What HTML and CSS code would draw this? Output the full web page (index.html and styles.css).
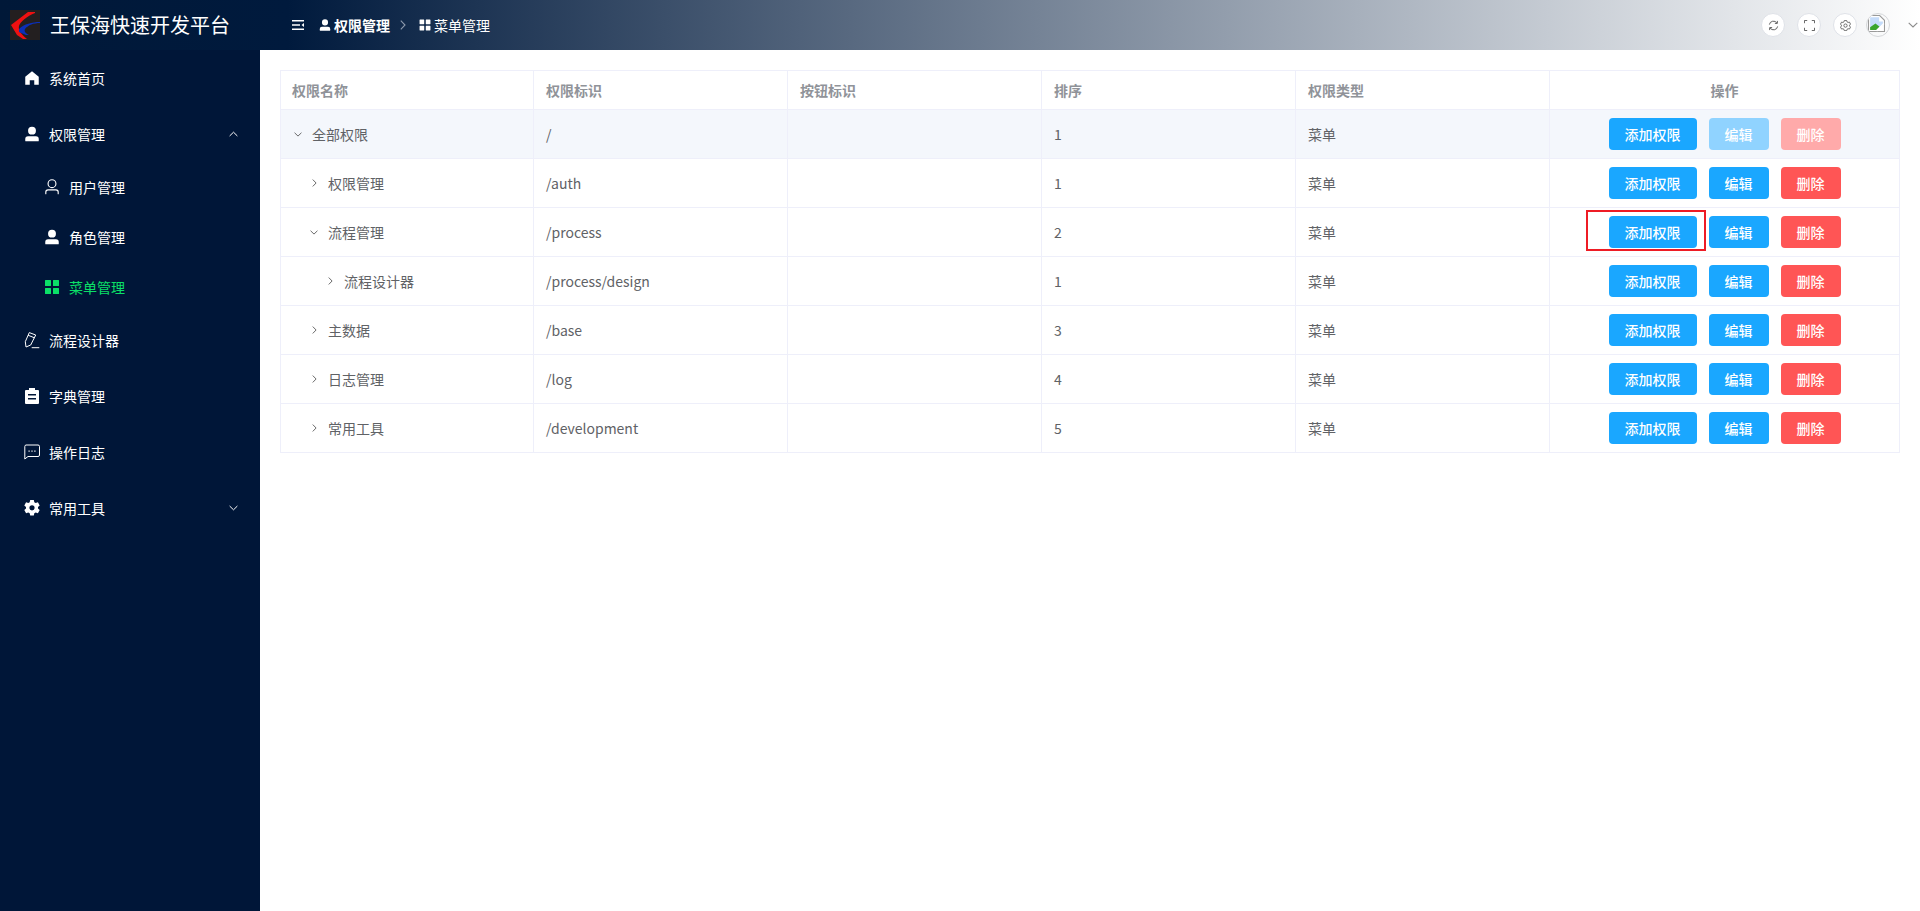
FILE: index.html
```html
<!DOCTYPE html>
<html>
<head>
	<meta charset="utf-8">
	<meta name="viewport" content="width=device-width, initial-scale=1">
	<title>王保海快速开发平台</title>
	<link rel="stylesheet" href="styles.css">
</head>
<body>
	<svg class="sprite" xmlns="http://www.w3.org/2000/svg">
		<symbol id="i-home" viewBox="0 0 1024 1024"><path fill="currentColor" d="M512 128 128 447.936V896h255.936V640H640v256h255.936V447.936z"/></symbol>
		<symbol id="i-user-fill" viewBox="0 0 1024 1024"><path fill="currentColor" d="M288 320a224 224 0 1 0 448 0 224 224 0 1 0-448 0m544 608H160a32 32 0 0 1-32-32v-96a160 160 0 0 1 160-160h448a160 160 0 0 1 160 160v96a32 32 0 0 1-32 32z"/></symbol>
		<symbol id="i-user" viewBox="0 0 1024 1024"><path fill="currentColor" d="M512 512a192 192 0 1 0 0-384 192 192 0 0 0 0 384zm0 64a256 256 0 1 1 0-512 256 256 0 0 1 0 512zm320 320v-96a96 96 0 0 0-96-96H288a96 96 0 0 0-96 96v96a32 32 0 1 1-64 0v-96a160 160 0 0 1 160-160h448a160 160 0 0 1 160 160v96a32 32 0 1 1-64 0z"/></symbol>
		<symbol id="i-grid" viewBox="-2 -2 18 18"><path fill="currentColor" d="M0 .5a.5.5 0 0 1 .5-.5h5a.5.5 0 0 1 .5.5v5a.5.5 0 0 1-.5.5h-5a.5.5 0 0 1-.5-.5zM8 .5a.5.5 0 0 1 .5-.5h5a.5.5 0 0 1 .5.5v5a.5.5 0 0 1-.5.5h-5a.5.5 0 0 1-.5-.5zM0 8.5a.5.5 0 0 1 .5-.5h5a.5.5 0 0 1 .5.5v5a.5.5 0 0 1-.5.5h-5a.5.5 0 0 1-.5-.5zM8 8.5a.5.5 0 0 1 .5-.5h5a.5.5 0 0 1 .5.5v5a.5.5 0 0 1-.5.5h-5a.5.5 0 0 1-.5-.5z"/></symbol>
		<symbol id="i-pen" viewBox="-1 -1 18 18"><path fill="none" stroke="currentColor" d="M5.300.6 11.700 3 6.700 13 2 15 1.300 9.700zM4 3.200l6.400 2.600"/><path fill="none" stroke="currentColor" d="M7.700 15.700h7.600"/></symbol>
		<symbol id="i-clip" viewBox="-2 -1 18 18"><path fill="currentColor" d="M4 0h6v2h3a1 1 0 0 1 1 1v12a1 1 0 0 1-1 1H1a1 1 0 0 1-1-1V3a1 1 0 0 1 1-1h3zM3 6v1.600h8V6zm0 4v1.600h8V10z"/></symbol>
		<symbol id="i-chat" viewBox="-1 -1 18 18"><path fill="none" stroke="currentColor" d="M2 1h12a1.500 1.500 0 0 1 1.500 1.500v8.500a1.500 1.500 0 0 1-1.500 1.500H4L.8 15V2.500A1.500 1.500 0 0 1 2 1z"/><path fill="currentColor" d="M4.500 6.500h1.200v1.200H4.500zM7.400 6.500h1.200v1.200H7.400zM10.300 6.500h1.200v1.200h-1.200z"/></symbol>
		<symbol id="i-gear" viewBox="-1 -1 18 18"><path fill="currentColor" fill-rule="evenodd" d="M6.200 0h3.600l.5 2.200 1.400.8 2.200-.7L15.700 5.400l-1.700 1.500v1.700l1.700 1.500-1.800 3.100-2.200-.7-1.400.8-.5 2.200H6.200l-.5-2.200-1.400-.8-2.200.7L.3 10.100l1.700-1.500V6.900L.3 5.400l1.800-3.100 2.200.7 1.400-.8zM8 5.200a2.600 2.600 0 1 0 0 5.200 2.600 2.600 0 0 0 0-5.200z"/></symbol>
		<symbol id="i-down" viewBox="0 0 10 6"><path fill="none" stroke="currentColor" stroke-width="1.100" d="M.7.800 5 5 9.300.800"/></symbol>
		<symbol id="i-up" viewBox="0 0 10 6"><path fill="none" stroke="currentColor" stroke-width="1.100" d="M.7 5.200 5 1l4.300 4.200"/></symbol>
		<symbol id="i-right" viewBox="0 0 6 10"><path fill="none" stroke="currentColor" stroke-width="1.100" d="M.8.700 5 5 .8 9.300"/></symbol>
	</svg>

	<header class="topbar">
		<div class="brand">
			<svg class="brand-logo" viewBox="0 0 30 30">
				<rect width="30" height="30" fill="#231f20"/>
				<path fill="#ee1111" d="M25 2H18L1 15l6 10 6 4h4C11 24 8 20 9 16c1-4 8-10 16-13z"/>
				<path fill="#0b2fb8" d="M30 12C22 12 14 14 9 19v3l7 3h3c-4-2-5-4-4-6 3-4 9-6 15-6z"/>
			</svg>
			<span class="brand-title">王保海快速开发平台</span>
		</div>
		<svg class="fold-icon" viewBox="0 0 12 10"><path fill="none" stroke="#fff" stroke-width="1.400" d="M0 .7h12M0 5h8M0 9.300h12"/><path fill="#fff" d="M12 3l-2.500 2L12 7z"/></svg>
		<nav class="crumbs">
			<svg class="crumb-icon"><use href="#i-user-fill"/></svg>
			<span class="crumb-strong">权限管理</span>
			<svg class="crumb-sep"><use href="#i-right"/></svg>
			<svg class="crumb-icon"><use href="#i-grid"/></svg>
			<span class="crumb-last">菜单管理</span>
		</nav>
		<div class="tools">
			<span class="tool">
				<svg viewBox="0 0 12 12"><path fill="none" stroke="#444" stroke-width=".9" d="M1.500 5A4.500 4.500 0 0 1 9.700 3.300M10.500 7A4.500 4.500 0 0 1 2.300 8.700M10.200 1v2.700H7.500M1.800 11V8.300h2.700"/></svg>
			</span>
			<span class="tool">
				<svg viewBox="0 0 12 12"><path fill="none" stroke="#444" stroke-width=".9" d="M.5 3.500V.5h3M8.500.5h3v3M11.500 8.500v3h-3M3.500 11.500h-3v-3"/></svg>
			</span>
			<span class="tool">
				<svg viewBox="0 0 12 12"><path fill="none" stroke="#444" stroke-width=".8" d="M4.700.6h2.600l.4 1.500 1.100.6 1.500-.4 1.200 2.200-1.100 1.100v1l1.100 1.100-1.200 2.200-1.500-.4-1.100.6-.4 1.500H4.700l-.4-1.500-1.100-.6-1.500.4L.5 7.700l1.100-1.100v-1L.5 4.500l1.200-2.200 1.500.4 1.100-.6z"/><circle cx="6" cy="6.100" r="1.800" fill="none" stroke="#444" stroke-width=".8"/></svg>
			</span>
			<span class="avatar">
				<svg viewBox="0 0 16 16">
					<path fill="#fff" stroke="#9a9a9a" d="M.5.500h10.500l4.500 4.500v10.500H.5z"/>
					<path fill="#c5dcfa" d="M2 2h8.500v4H14v4L2 13z"/>
					<path fill="#3aa52c" d="M2 14v-2.500L7 8l4 3-3 3z"/>
					<path fill="none" stroke="#fff" stroke-width="1.500" d="M8 15l7-7"/>
				</svg>
			</span>
			<svg class="avatar-caret"><use href="#i-down"/></svg>
		</div>
	</header>

	<div class="layout">
		<aside class="sidebar">
			<a class="menu-item"><svg class="menu-icon"><use href="#i-home"/></svg>系统首页</a>
			<a class="menu-item"><svg class="menu-icon"><use href="#i-user-fill"/></svg>权限管理<svg class="menu-arrow"><use href="#i-up"/></svg></a>
			<a class="menu-sub"><svg class="menu-icon"><use href="#i-user"/></svg>用户管理</a>
			<a class="menu-sub"><svg class="menu-icon"><use href="#i-user-fill"/></svg>角色管理</a>
			<a class="menu-sub active"><svg class="menu-icon"><use href="#i-grid"/></svg>菜单管理</a>
			<a class="menu-item"><svg class="menu-icon"><use href="#i-pen"/></svg>流程设计器</a>
			<a class="menu-item"><svg class="menu-icon"><use href="#i-clip"/></svg>字典管理</a>
			<a class="menu-item"><svg class="menu-icon"><use href="#i-chat"/></svg>操作日志</a>
			<a class="menu-item"><svg class="menu-icon"><use href="#i-gear"/></svg>常用工具<svg class="menu-arrow"><use href="#i-down"/></svg></a>
		</aside>

		<main class="content">
			<table class="grid">
				<colgroup>
					<col class="col-data"><col class="col-data"><col class="col-data"><col class="col-data"><col class="col-data"><col>
				</colgroup>
				<thead>
					<tr>
						<th>权限名称</th>
						<th>权限标识</th>
						<th>按钮标识</th>
						<th>排序</th>
						<th>权限类型</th>
						<th class="center">操作</th>
					</tr>
				</thead>
				<tbody>
					<tr class="row-current">
						<td><div class="tree"><svg class="tree-down"><use href="#i-down"/></svg>全部权限</div></td>
						<td>/</td><td></td><td>1</td><td>菜单</td>
						<td><div class="ops"><button class="btn">添加权限</button><button class="btn off">编辑</button><button class="btn danger off">删除</button></div></td>
					</tr>
					<tr>
						<td><div class="tree lvl1"><svg class="tree-right"><use href="#i-right"/></svg>权限管理</div></td>
						<td>/auth</td><td></td><td>1</td><td>菜单</td>
						<td><div class="ops"><button class="btn">添加权限</button><button class="btn">编辑</button><button class="btn danger">删除</button></div></td>
					</tr>
					<tr>
						<td><div class="tree lvl1"><svg class="tree-down"><use href="#i-down"/></svg>流程管理</div></td>
						<td>/process</td><td></td><td>2</td><td>菜单</td>
						<td><div class="ops"><button class="btn marked">添加权限</button><button class="btn">编辑</button><button class="btn danger">删除</button></div></td>
					</tr>
					<tr>
						<td><div class="tree lvl2"><svg class="tree-right"><use href="#i-right"/></svg>流程设计器</div></td>
						<td>/process/design</td><td></td><td>1</td><td>菜单</td>
						<td><div class="ops"><button class="btn">添加权限</button><button class="btn">编辑</button><button class="btn danger">删除</button></div></td>
					</tr>
					<tr>
						<td><div class="tree lvl1"><svg class="tree-right"><use href="#i-right"/></svg>主数据</div></td>
						<td>/base</td><td></td><td>3</td><td>菜单</td>
						<td><div class="ops"><button class="btn">添加权限</button><button class="btn">编辑</button><button class="btn danger">删除</button></div></td>
					</tr>
					<tr>
						<td><div class="tree lvl1"><svg class="tree-right"><use href="#i-right"/></svg>日志管理</div></td>
						<td>/log</td><td></td><td>4</td><td>菜单</td>
						<td><div class="ops"><button class="btn">添加权限</button><button class="btn">编辑</button><button class="btn danger">删除</button></div></td>
					</tr>
					<tr>
						<td><div class="tree lvl1"><svg class="tree-right"><use href="#i-right"/></svg>常用工具</div></td>
						<td>/development</td><td></td><td>5</td><td>菜单</td>
						<td><div class="ops"><button class="btn">添加权限</button><button class="btn">编辑</button><button class="btn danger">删除</button></div></td>
					</tr>
				</tbody>
			</table>
		</main>
	</div>
</body>
</html>
```
FILE: styles.css
```css
* {
	box-sizing: border-box;
}
html, body {
	margin: 0;
	height: 100%;
}
body {
	font-family: "Noto Sans CJK SC", "Noto Sans", sans-serif;
	font-size: 14px;
	color: #606266;
	background: #fff;
	overflow: hidden;
}
.sprite {
	display: none;
}

/* top bar */
.topbar {
	height: 50px;
	display: flex;
	align-items: center;
	background: linear-gradient(to right, #001838 0%, #001a3d 15%, #ffffff 100%);
}
.brand {
	width: 260px;
	padding-left: 10px;
	display: flex;
	align-items: center;
	flex-shrink: 0;
}
.brand-logo {
	width: 30px;
	height: 30px;
}
.brand-title {
	margin-left: 10px;
	font-size: 20px;
	line-height: 30px;
	color: #fff;
}
.fold-icon {
	width: 12px;
	height: 10px;
	margin-left: 32px;
}
.crumbs {
	display: flex;
	align-items: center;
	margin-left: 14px;
	color: #fff;
}
.crumb-icon {
	width: 14px;
	height: 14px;
	margin-right: 2px;
}
.crumb-strong {
	font-weight: 700;
}
.crumb-last {
	font-weight: 400;
}
.crumb-sep {
	width: 6px;
	height: 10px;
	margin: 0 12px 0 10px;
	color: #8d9aac;
}
.tools {
	margin-left: auto;
	display: flex;
	align-items: center;
	padding-right: 2px;
}
.tool {
	width: 24px;
	height: 24px;
	margin-right: 12px;
	border-radius: 50%;
	background: #fff;
	border: 1px solid #dfe2e8;
	display: flex;
	align-items: center;
	justify-content: center;
}
.tool svg {
	width: 11px;
	height: 11px;
}
.avatar {
	width: 24px;
	height: 24px;
	border-radius: 50%;
	border: 1px solid #d5d7da;
	overflow: hidden;
	display: block;
	margin-left: -3px;
}
.avatar svg {
	display: block;
	width: 17px;
	height: 17px;
	margin: 1px 0 0 1px;
}
.avatar-caret {
	width: 10px;
	height: 6px;
	margin-left: 18px;
	color: #8b8b8b;
}

/* body */
.layout {
	display: flex;
	height: calc(100% - 50px);
}
.sidebar {
	width: 260px;
	flex-shrink: 0;
	background: #001638;
	color: #fff;
}
.menu-item, .menu-sub {
	display: flex;
	align-items: center;
	white-space: nowrap;
}
.menu-item {
	height: 56px;
	padding: 0 22px 0 23px;
}
.menu-sub {
	height: 50px;
	padding-left: 43px;
}
.menu-sub.active {
	color: #0be067;
}
.menu-icon {
	width: 18px;
	height: 18px;
	margin-right: 8px;
	flex-shrink: 0;
}
.menu-arrow {
	width: 9px;
	height: 6px;
	margin-left: auto;
}

/* table */
.content {
	flex: 1;
	padding: 20px;
	overflow: hidden;
}
.grid {
	width: 1620px;
	table-layout: fixed;
	border-collapse: separate;
	border-spacing: 0;
	border-top: 1px solid #eeeffa;
}
.col-data {
	width: 254px;
}
.grid th, .grid td {
	border-right: 1px solid #eeeffa;
	border-bottom: 1px solid #eeeffa;
	padding: 0 12px;
	text-align: left;
}
.grid th:first-child, .grid td:first-child {
	border-left: 1px solid #eeeffa;
	padding-left: 11px;
}
.grid th {
	height: 39px;
	font-weight: 700;
	color: #909399;
}
.grid th.center {
	text-align: center;
}
.grid td {
	height: 49px;
	color: #606266;
}
.row-current td {
	background: #f4f7fc;
}
.tree {
	display: flex;
	align-items: center;
}
.tree.lvl1 {
	padding-left: 16px;
}
.tree.lvl2 {
	padding-left: 32px;
}
.tree-down {
	width: 8px;
	height: 5px;
	margin: 0 10px 0 2px;
	color: #555;
}
.tree-right {
	width: 5px;
	height: 8px;
	margin: 0 11px 0 4px;
	color: #555;
}
.ops {
	display: flex;
	justify-content: center;
	gap: 12px;
}
.btn {
	height: 32px;
	padding: 0 16px;
	border: none;
	border-radius: 4px;
	background: #1aa7ff;
	color: #fff;
	font-family: inherit;
	font-size: 14px;
	font-weight: 500;
	position: relative;
}
.btn.off {
	background: #90d3ff;
}
.btn.danger {
	background: #ff5555;
}
.btn.danger.off {
	background: #ffaaaa;
}
/* red box drawn on top of the button in the screenshot */
.btn.marked::after {
	content: "";
	position: absolute;
	left: -23px;
	right: -9px;
	top: -6px;
	bottom: -3px;
	border: 2px solid #ee1c25;
}
```
